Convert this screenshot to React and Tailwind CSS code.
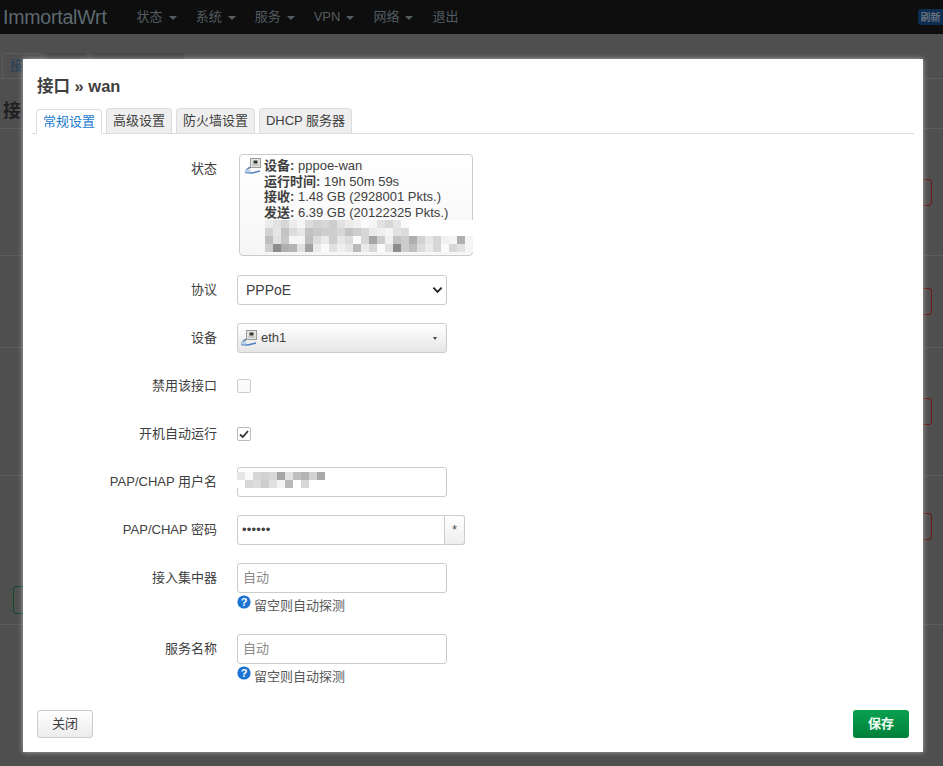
import React from "react";

const FONT = { fontFamily: '"Liberation Sans","Noto Sans CJK SC",Arial,sans-serif' };

const Eth = ({ className = "" }) => (
  <svg viewBox="0 0 16 16" width="16" height="16" className={className}>
    <rect x="5.5" y="0.5" width="10" height="9" fill="#e4e4e0" stroke="#9a9a96" />
    <rect x="8.5" y="2.5" width="4" height="3" fill="#2f3a2c" />
    <rect x="7" y="6" width="7" height="2" fill="#c8c8c4" />
    <path d="M5 9 L1.5 12 L1 14.5 L7 15 L15 13" fill="none" stroke="#4f7fbf" strokeWidth="1.6" />
    <path d="M3 10.5 L6 9.5" stroke="#888" strokeWidth="1" />
    <rect x="0.5" y="11.5" width="5" height="3" fill="#bcd0e8" />
  </svg>
);

const mosaicRows = [
  [235, 225, 215, 235, 245, 220, 210, 215, 205, 225, 235, 240, 250, 245, 225, 215, 230, 250, 255, 255, 255, 255, 255, 255, 255, 255],
  [210, 230, 195, 220, 230, 195, 200, 205, 205, 215, 195, 205, 215, 235, 240, 245, 225, 220, 255, 255, 255, 255, 255, 255, 255, 255],
  [190, 225, 200, 245, 245, 190, 220, 235, 205, 230, 220, 250, 215, 165, 205, 240, 195, 205, 175, 210, 230, 215, 240, 245, 175, 245],
  [205, 140, 175, 180, 225, 160, 235, 250, 225, 240, 230, 185, 235, 215, 250, 225, 140, 205, 190, 220, 235, 215, 250, 215, 225, 245],
];
const userRows = [
  [230, 250, 215, 210, 215, 165, 225, 190, 180, 210, 170],
  [255, 215, 220, 205, 225, 245, 185, 255, 215, 255, 255],
];

const Mosaic = ({ rows, size = 8, cls, w, h }) => (
  <svg width={w} height={h} className={cls} style={{ filter: "blur(0.4px)" }}>
    {rows.map((r, y) =>
      r.map((v, x) => (
        <rect key={x + "-" + y} x={x * size} y={y * size} width={size} height={size} fill={`rgb(${v},${v},${v})`} />
      ))
    )}
  </svg>
);

const Row = ({ label, children, className = "" }) => (
  <div className={`flex ${className}`}>
    <div className="w-[194px] shrink-0 text-right text-[13px] leading-[30px] text-[#404040]">{label}</div>
    <div className="ml-[20px] min-w-0">{children}</div>
  </div>
);

const Help = () => (
  <div className="mt-[3px] flex h-[17px] items-start text-[13px] leading-[18px] text-[#595959]">
    <svg viewBox="0 0 14 14" width="14" height="14" className="mt-[-1px]">
      <circle cx="7" cy="7" r="6.6" fill="#1a73d0" />
      <text x="7" y="10.8" textAnchor="middle" fontSize="11" fontWeight="700" fill="#fff" fontFamily="Liberation Sans">?</text>
    </svg>
    <span className="ml-[3px] mt-[1px]">留空则自动探测</span>
  </div>
);

const inputCls = "flex h-[30px] w-[210px] items-center rounded-[3px] border border-[#ccc] bg-white px-[5px] text-[13px] text-[#8a8a8a]";

const Tab = ({ children, active, w }) => (
  <div
    className={`flex h-[25px] items-center justify-center rounded-t-[4px] border border-[#ddd] text-[13px] ${w} ${
      active ? "relative top-px border-b-white bg-white text-[#1a7ad0]" : "border-b-0 bg-[#eee] text-[#404040]"
    }`}
  >
    {children}
  </div>
);

const Menu = ({ children, caret = true }) => (
  <span className="flex items-center text-[13px] text-[#535c60]">
    {children}
    {caret && <span className="ml-[6px] mt-[1px] h-0 w-0 border-x-[4px] border-t-[4px] border-x-transparent border-t-[#535c60]" />}
  </span>
);

export default function App() {
  return (
    <div style={FONT} className="relative h-[766px] w-[943px] overflow-hidden bg-[#4f4f4f]">
      {/* dimmed page */}
      <header className="flex h-[34px] items-center justify-between bg-[#0e0e0e]">
        <div className="flex items-center">
          <span className="ml-[3px] text-[19.5px] leading-[26px] tracking-[-0.2px] text-[#5d6a70]">ImmortalWrt</span>
          <nav className="ml-[30px] flex gap-[19px]">
            <Menu>状态</Menu>
            <Menu>系统</Menu>
            <Menu>服务</Menu>
            <Menu>VPN</Menu>
            <Menu>网络</Menu>
            <Menu caret={false}>退出</Menu>
          </nav>
        </div>
        <span className="flex h-[16px] w-[25px] items-center justify-center rounded-l-[3px] bg-[#0c2c50] text-[10px] font-bold text-[#66707a]">刷新</span>
      </header>

      <div className="flex h-[44px] items-end pl-[2px] pt-[19px]">
        <div className="flex h-[25px] w-[40px] items-center rounded-t-[4px] border border-[#5c5c5c] border-b-0 pl-[7px] text-[13px] text-[#1d3f5c]">接</div>
        <div className="ml-[5px] h-[25px] w-[40px] rounded-t-[4px] bg-[#474747]" />
        <div className="ml-[5px] h-[25px] w-[92px] rounded-t-[4px] bg-[#474747]" />
      </div>
      <div className="h-px bg-[#5c5c5c]" />
      <div className="pl-[3px] pt-[20px] text-[18px] font-bold leading-[24px] text-[#1f1f1f]">接</div>
      <div className="mt-[5px] h-px bg-[#5c5c5c]" />

      <section className="flex h-[127px] items-center justify-end border-b border-[#5c5c5c] pr-[11px]">
        <div className="h-[27px] w-[40px] rounded-[3px] border border-[#6b1a14]" />
      </section>
      <section className="flex h-[92px] items-center justify-end border-b border-[#5c5c5c] pr-[11px]">
        <div className="h-[27px] w-[40px] rounded-[3px] border border-[#6b1a14]" />
      </section>
      <section className="flex h-[128px] items-center justify-end border-b border-[#5c5c5c] pr-[11px]">
        <div className="h-[27px] w-[40px] rounded-[3px] border border-[#6b1a14]" />
      </section>
      <section className="flex h-[100px] items-center justify-end pr-[11px]">
        <div className="h-[27px] w-[40px] rounded-[3px] border border-[#6b1a14]" />
      </section>
      <div className="ml-[13px] mt-[10px] h-[28px] w-[40px] rounded-[3px] border border-[#0d4a28]" />
      <div className="mt-[10px] h-px bg-[#5c5c5c]" />

      {/* modal */}
      <div className="absolute left-[23px] top-[59px] h-[693px] w-[900px] bg-white px-[9px] shadow-[0_0_5px_rgba(255,255,255,0.55)]">
        <h3 className="pl-[5px] pt-[17px] text-[16.5px] font-bold leading-[20px] text-[#404040]">接口 » wan</h3>
        <div className="mt-[12px] flex gap-[4px] border-b border-[#ddd] pl-[4px]">
          <Tab active w="w-[66px]">常规设置</Tab>
          <Tab w="w-[66px]">高级设置</Tab>
          <Tab w="w-[79px]">防火墙设置</Tab>
          <Tab w="w-[93px]">DHCP 服务器</Tab>
        </div>

        <div className="-ml-[9px] mt-[20px]">
          <Row label="状态" className="h-[121px]">
            <div className="relative ml-[2px] h-[102px] w-[234px] rounded-[4px] border border-[#ccc] bg-gradient-to-b from-white to-[#f6f6f6] pl-[24px] pt-[3px] text-[13px] leading-[15.6px] text-[#404040]">
              <Eth className="absolute left-[5px] top-[3px]" />
              <div><b>设备:</b> pppoe-wan</div>
              <div><b>运行时间:</b> 19h 50m 59s</div>
              <div><b>接收:</b> 1.48 GB (2928001 Pkts.)</div>
              <div><b>发送:</b> 6.39 GB (20122325 Pkts.)</div>
              <Mosaic rows={mosaicRows} w={214} h={32} cls="absolute left-[25px] top-[65px]" />
            </div>
          </Row>
          <Row label="协议" className="h-[48px]">
            <div className="flex h-[30px] w-[210px] items-center justify-between rounded-[3px] border border-[#ccc] bg-white pl-[8px] pr-[3px] text-[14px] text-[#404040]">
              PPPoE
              <svg viewBox="0 0 12 8" width="11" height="8"><path d="M1.5 1.5 L6 6 L10.5 1.5" fill="none" stroke="#222" strokeWidth="2" /></svg>
            </div>
          </Row>
          <Row label="设备" className="h-[48px]">
            <div className="flex h-[30px] w-[210px] items-center rounded-[3px] border border-[#ccc] bg-gradient-to-b from-white to-[#e6e6e6] pl-[3px] pr-[9px] text-[13px] text-[#404040]">
              <Eth />
              <span className="ml-[4px]">eth1</span>
              <span className="ml-auto h-0 w-0 border-x-[2.5px] border-t-[3px] border-x-transparent border-t-[#444]" />
            </div>
          </Row>
          <Row label="禁用该接口" className="h-[48px]">
            <div className="mt-[8px] h-[14px] w-[14px] rounded-[2px] border border-[#ccc] bg-[#fafafa]" />
          </Row>
          <Row label="开机自动运行" className="h-[48px]">
            <div className="mt-[8px] flex h-[14px] w-[14px] items-center justify-center rounded-[2px] border border-[#bbb] bg-white">
              <svg viewBox="0 0 12 12" width="12" height="12"><path d="M2 6.5 L4.8 9 L10 3" fill="none" stroke="#333" strokeWidth="1.8" /></svg>
            </div>
          </Row>
          <Row label="PAP/CHAP 用户名" className="h-[48px]">
            <div className={`${inputCls} relative`}>
              <Mosaic rows={userRows} w={90} h={16} cls="absolute left-[-1px] top-[4px]" />
            </div>
          </Row>
          <Row label="PAP/CHAP 密码" className="h-[48px]">
            <div className="flex">
              <div className="flex h-[30px] w-[208px] items-center rounded-l-[3px] border border-[#ccc] bg-white pl-[4px] text-[13px] tracking-[0.2px] text-[#404040]">••••••</div>
              <div className="flex h-[30px] w-[20px] items-center justify-center rounded-r-[3px] border border-l-0 border-[#ccc] bg-gradient-to-b from-white to-[#eee] text-[13px] text-[#555]">*</div>
            </div>
          </Row>
          <Row label="接入集中器" className="h-[71px]">
            <div className={inputCls}>自动</div>
            <Help />
          </Row>
          <Row label="服务名称" className="h-[52px]">
            <div className={inputCls}>自动</div>
            <Help />
          </Row>
        </div>

        <div className="absolute inset-x-[14px] bottom-[14px] flex justify-between">
          <div className="flex h-[28px] w-[56px] items-center justify-center rounded-[3px] border border-[#ccc] bg-gradient-to-b from-white to-[#ececec] text-[13px] text-[#404040]">关闭</div>
          <div className="flex h-[28px] w-[56px] items-center justify-center rounded-[3px] bg-gradient-to-b from-[#0aa04f] to-[#00803a] text-[13px] font-bold text-[#f0fff5]">保存</div>
        </div>
      </div>
    </div>
  );
}
